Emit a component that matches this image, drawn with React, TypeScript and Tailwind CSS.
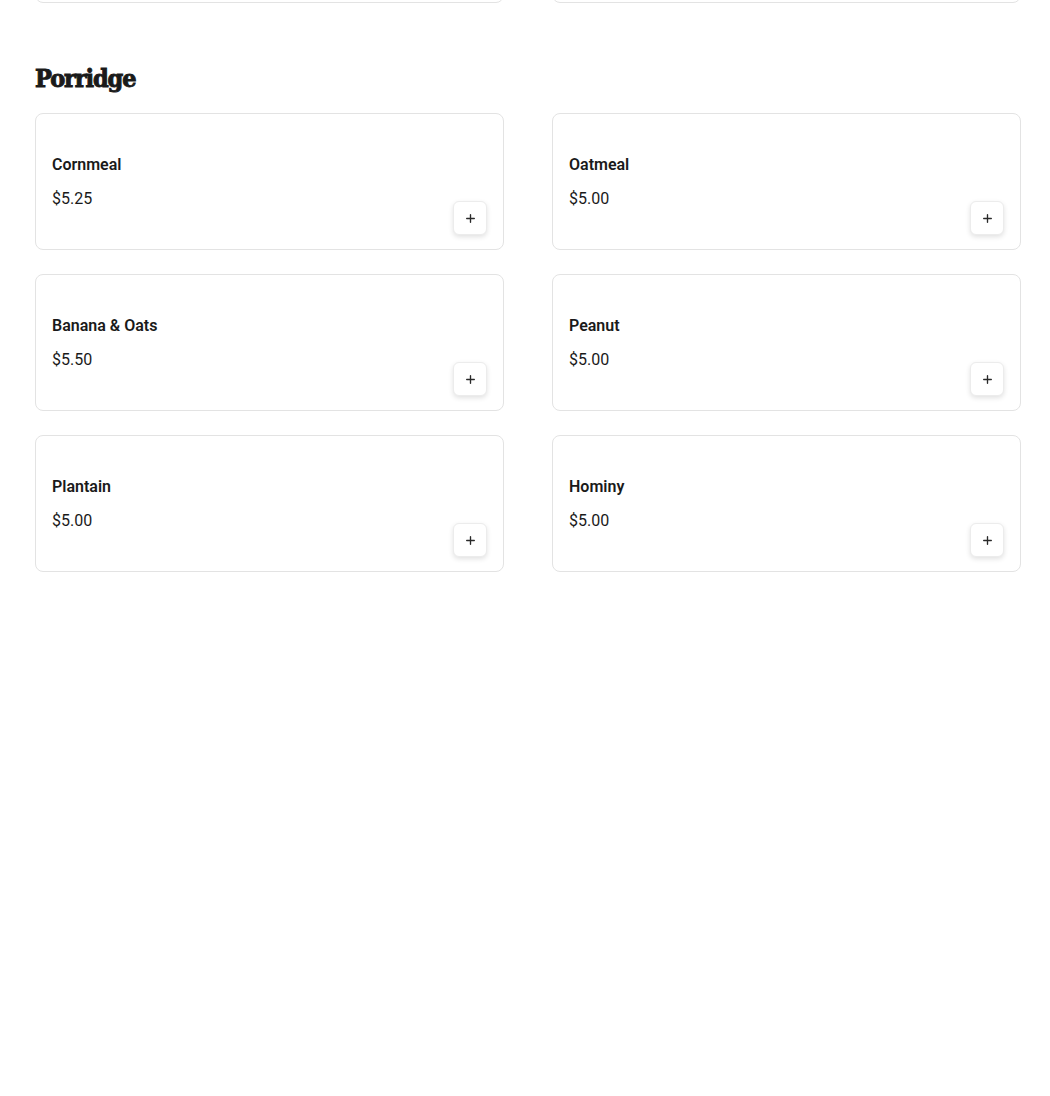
import { Plus } from "lucide-react";

type Item = { name: string; price: string };

const items: Item[] = [
  { name: "Cornmeal", price: "$5.25" },
  { name: "Oatmeal", price: "$5.00" },
  { name: "Banana & Oats", price: "$5.50" },
  { name: "Peanut", price: "$5.00" },
  { name: "Plantain", price: "$5.00" },
  { name: "Hominy", price: "$5.00" },
];

function ItemCard({ name, price }: Item) {
  return (
    <div className="flex h-[137px] items-end justify-between rounded-lg border border-[#e3e3e3] bg-white px-4 pb-[14px] pt-4">
      <div className="self-start pt-[23px]">
        <h3 className="text-base font-semibold leading-6 text-[#1a1a1a]">{name}</h3>
        <p className="mt-[10px] text-base leading-6 text-[#1a1a1a]">{price}</p>
      </div>
      <button
        type="button"
        aria-label={`Add ${name}`}
        className="flex h-[34px] w-[34px] items-center justify-center rounded-md border border-[#ececec] bg-white text-[#2a2a2a] shadow-[0_2px_5px_rgba(0,0,0,0.12)]"
      >
        <Plus size={13} strokeWidth={2.5} />
      </button>
    </div>
  );
}

export default function App() {
  return (
    <div className="min-h-[1096px] bg-white font-['Roboto',sans-serif]">
      <div className="w-[1021px] pl-[35px]">
        {/* tail of the previous section, scrolled mostly off screen */}
        <div className="-mt-[134px] grid grid-cols-2 gap-x-[48px]">
          <div className="h-[137px] rounded-lg border border-[#e3e3e3]" />
          <div className="h-[137px] rounded-lg border border-[#e3e3e3]" />
        </div>

        <section className="pt-[60px]">
          <h2 className="font-['DejaVu_Serif_Condensed','DejaVu_Serif',serif] text-[25px] font-bold leading-8 tracking-[-1.1px] text-[#1a1a1a] [-webkit-text-stroke:0.9px_#1a1a1a]">
            Porridge
          </h2>
          <div className="mt-[18px] grid grid-cols-2 gap-x-[48px] gap-y-[24px]">
            {items.map((it) => (
              <ItemCard key={it.name} {...it} />
            ))}
          </div>
        </section>
      </div>
    </div>
  );
}
